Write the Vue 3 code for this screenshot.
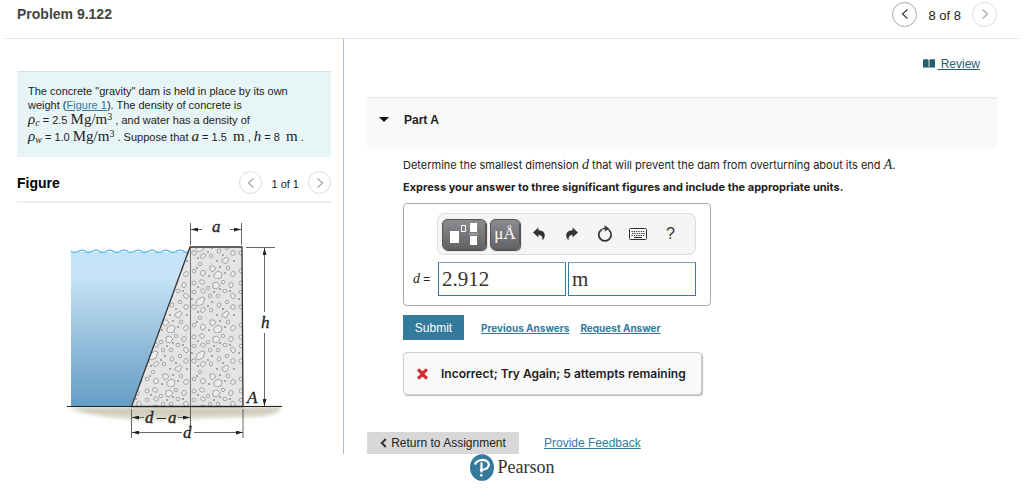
<script setup>
import { ref } from 'vue'

const value = ref('2.912')
const units = ref('m')

// Water surface, one crest every 14 units
const waves = 'M71 251' + 'q3 2.5 7 .5q4 -2.500 7 -.5'.repeat(8) + 'q2 2 5 .5'

// Stones of one texture tile: [x, y, rx, ry, rotation]
const stones = [
  [4, 4, 2, 2, 0], [12, 3, 2.6, 2, 30], [33, 3, 1.7, 1.7, 0], [41, 6, 2.1, 2.6, 20],
  [18, 9, 1.7, 1.7, 0], [4, 13, 2, 1.7, 0], [13, 12, 2.4, 1.9, 40], [35, 12, 2.1, 1.7, 0],
  [43, 17, 2.8, 2.2, 60], [20, 17, 1.6, 2, 0], [28, 17, 1.8, 1.8, 0], [4, 28, 2.4, 1.9, 30],
  [37, 23, 1.7, 1.7, 0], [29, 26, 1.8, 2.3, 20], [43, 28, 2.2, 2.4, 0],
  [13, 31, 2.9, 2, 140], [21, 31, 1.6, 2, 0], [10, 39, 1.7, 1.7, 0],
  [4, 46, 1.8, 1.8, 0], [13, 48, 2.4, 2.8, 20], [38, 43, 1.6, 2, 0],
  [43, 49, 2.6, 2.2, 130]
]
const chunks = [
  'M7 21l5-3 3 1-2 6-5 2-2-2z',
  'M23 4l4-1 3 3-3 4-4-1z',
  'M24 49l4-3 4 2-1 5-5 1-2-2z',
  'M32 35l5-3 2 2-3 5-4-2z',
  'M20 41l4 0 2 3-4 3-2-2z'
]
const grains = [
  [8, 8], [30, 10], [24, 13], [40, 12], [2, 20], [22, 23], [33, 30], [8, 33], [27, 36],
  [44, 36], [7, 43], [30, 42], [35, 48], [19, 51], [18, 27]
]
const arrows = [
  'M202 229.500H191', 'M230 229.500H241', 'M264.500 312V248', 'M264.500 333V406',
  'M144 417.500H132', 'M178 417.500H190', 'M182 432.500H132', 'M194 432.500H243'
]
</script>

<template>
  <div class="page">
    <header class="topbar">
      <h1>Problem 9.122</h1>
      <nav class="pager" aria-label="Problems">
        <button class="round active" aria-label="Previous problem">
          <svg width="8" height="12" viewBox="0 0 8 12"><path d="M6.500 1.500 1.500 6l5 4.500" /></svg>
        </button>
        <span>8 of 8</span>
        <button class="round" aria-label="Next problem">
          <svg width="8" height="12" viewBox="0 0 8 12"><path d="M1.500 1.500 6.500 6l-5 4.500" /></svg>
        </button>
      </nav>
    </header>

    <main class="columns">
      <section class="left">
        <p class="statement">
          <span class="row">The concrete "gravity" dam is held in place by its own</span>
          <span class="row">weight (<a href="#figure">Figure 1</a>). The density of concrete is</span>
          <span class="row tall"><i>ρ<sub>c</sub></i> = 2.5 <b>Mg/m<sup>3</sup></b> , and water has a density of</span>
          <span class="row tall"><i>ρ<sub>w</sub></i> = 1.0 <b>Mg/m<sup>3</sup></b> . Suppose that <i>a</i> = 1.5 &nbsp;<b>m</b> , <i>h</i> = 8 &nbsp;<b>m</b> .</span>
        </p>

        <div class="figure-head">
          <h2>Figure</h2>
          <nav class="pager small" aria-label="Figures">
            <button class="round" aria-label="Previous figure">
              <svg width="8" height="12" viewBox="0 0 8 12"><path d="M6.500 1.500 1.500 6l5 4.500" /></svg>
            </button>
            <span>1 of 1</span>
            <button class="round" aria-label="Next figure">
              <svg width="8" height="12" viewBox="0 0 8 12"><path d="M1.500 1.500 6.500 6l-5 4.500" /></svg>
            </button>
          </nav>
        </div>

        <svg id="figure" class="figure" width="230" height="230" viewBox="60 215 230 230" role="img" aria-label="Gravity dam holding back water">
          <defs>
            <linearGradient id="water" x1="0" y1="0" x2="0" y2="1">
              <stop offset="0" stop-color="#c3e3f8" />
              <stop offset="0.15" stop-color="#c8e5f8" />
              <stop offset="0.5" stop-color="#9ec5e0" />
              <stop offset="1" stop-color="#669dc5" />
            </linearGradient>
            <linearGradient id="soil" x1="0" y1="0" x2="0" y2="1">
              <stop offset="0" stop-color="#c9c7b5" />
              <stop offset="1" stop-color="#dad8cb" />
            </linearGradient>
            <filter id="soft" x="-10%" y="-50%" width="120%" height="200%"><feGaussianBlur stdDeviation="2" /></filter>
            <pattern id="concrete" x="190" y="333" width="47" height="54" patternUnits="userSpaceOnUse">
              <rect width="47" height="54" fill="#e4e4e4" />
              <g fill="#ececec" stroke="#888" stroke-width="0.700">
                <ellipse v-for="(s, i) in stones" :key="i" :cx="s[0]" :cy="s[1]" :rx="s[2]" :ry="s[3]" :transform="`rotate(${s[4]} ${s[0]} ${s[1]})`" />
                <path v-for="c in chunks" :key="c" :d="c" stroke-linejoin="round" />
              </g>
              <g fill="#333"><circle v-for="(g, i) in grains" :key="i" :cx="g[0]" :cy="g[1]" r="0.700" /></g>
            </pattern>
            <marker id="arrow" markerWidth="7" markerHeight="4" refX="7" refY="2" orient="auto" markerUnits="userSpaceOnUse"><path d="M0 0 7 2 0 4z" fill="#222" /></marker>
          </defs>
          <path d="M70 407H281Q280 417 240 417L150 420Q82 417 70 407" fill="url(#soil)" filter="url(#soft)" />
          <path d="M71 252H188.500L131.500 406H71z" fill="url(#water)" />
          <path :d="waves" fill="none" stroke="#54b9ea" stroke-width="1.300" />
          <path d="M190 247H242L243 406.500H131.500z" fill="url(#concrete)" stroke="#333" stroke-width="1.300" />
          <path d="M190.500 247V406" stroke="#555" stroke-width="0.800" />
          <path d="M67 406.500H282" stroke="#222" stroke-width="1.200" />
          <g fill="none" stroke="#555" stroke-width="0.900">
            <path d="M190.500 223V245M241.500 223V245M246 247.500H275M190.500 407V426M131.500 409V438M243 409V438" />
            <path v-for="a in arrows" :key="a" :d="a" marker-end="url(#arrow)" />
          </g>
          <g class="dims">
            <text x="212" y="232">a</text>
            <text x="261" y="328">h</text>
            <text x="247" y="403">A</text>
            <text x="145" y="423">d</text>
            <text x="157" y="422">–</text>
            <text x="168" y="423">a</text>
            <text x="183" y="438">d</text>
          </g>
        </svg>
      </section>

      <section class="right">
        <div class="review">
          <svg width="12" height="10" viewBox="0 0 12 10" fill="#265d73"><path d="M0 1 1 .3H4.600L5.600 1V9L4.600 8.500H0zM6.400 1 7.400.3H12V8.500H7.400L6.400 9z" /></svg>
          <a href="#review">&nbsp;Review</a>
        </div>

        <h2 class="part"><button aria-expanded="true"><span class="caret"></span>Part A</button></h2>

        <div class="question">
          <p class="ask">Determine the smallest dimension <i>d</i> that will prevent the dam from overturning about its end <i>A</i>.</p>
          <p class="hint">Express your answer to three significant figures and include the appropriate units.</p>

          <div class="answer">
            <div class="tools">
              <button class="key wide" aria-label="Templates">
                <svg width="28" height="24" viewBox="0 0 28 24"><path d="M0 9h9v12H0zM20 1h7v9h-7zM20 14h7v9h-7z" fill="#fff" /><path d="M11.500 3.500h4v6h-4z" fill="none" stroke="#fff" /><path d="M19 12h9" stroke="#bbb" /></svg>
              </button>
              <button class="key units" aria-label="Units">μÅ</button>
              <button class="tool" aria-label="Undo">
                <svg width="14" height="14" viewBox="0 0 14 14"><path d="M1 5.500 6.500 .5V3.300Q13 3.600 12.800 9 12.500 11.500 10.500 13.500 10.800 8 6.500 7.800V10.500z" fill="#333" /></svg>
              </button>
              <button class="tool" aria-label="Redo">
                <svg width="14" height="14" viewBox="0 0 14 14"><path d="M13 5.500 7.500 .5V3.300Q1 3.600 1.200 9 1.500 11.500 3.500 13.500 3.200 8 7.500 7.800V10.500z" fill="#333" /></svg>
              </button>
              <button class="tool" aria-label="Reset">
                <svg width="16" height="18" viewBox="0 0 16 18"><path d="M4.800 4.400A6.200 6.200 0 1 0 11.500 4.600" fill="none" stroke="#333" stroke-width="1.700" /><path d="M7 0 12.500 3.800 7.500 6.500 8.200 4 5.500 4.800 5 3.600 8 2.600z" fill="#333" /></svg>
              </button>
              <button class="tool" aria-label="Keyboard">
                <svg width="18" height="12" viewBox="0 0 18 12"><rect x=".5" y=".5" width="17" height="11" rx="1" fill="#fff" stroke="#333" /><path d="M2.500 3.500H16M3 5.500H16M2.500 7.500H16" stroke="#333" stroke-width="1.200" stroke-dasharray="1.300 1" /><path d="M5 9.500H13" stroke="#333" stroke-width="1.200" /></svg>
              </button>
              <button class="tool help" aria-label="Help">?</button>
            </div>
            <div class="entry">
              <label for="value"><i>d</i> =</label>
              <input id="value" v-model="value" />
              <input v-model="units" aria-label="Units of d" />
            </div>
          </div>

          <div class="actions">
            <button class="submit">Submit</button>
            <a href="#previous">Previous Answers</a>
            <a href="#request">Request Answer</a>
          </div>

          <div class="result" role="status">
            <svg width="13" height="12" viewBox="0 0 13 12"><path d="M2 1.500Q5 4 6.500 6T11 10.500M11 1.500Q7.500 4 6.500 6T2 10.500" fill="none" stroke="#d02b2f" stroke-width="3.200" /></svg>
            Incorrect; Try Again; 5 attempts remaining
          </div>
        </div>

        <div class="bottom">
          <button class="return">
            <svg width="7" height="10" viewBox="0 0 7 10"><path d="M5.800 1 1.800 5l4 4" fill="none" stroke="#333" stroke-width="2" /></svg>
            Return to Assignment
          </button>
          <a href="#feedback">Provide Feedback</a>
        </div>
      </section>
    </main>

    <footer class="brand">
      <svg width="24" height="27" viewBox="0 0 24 27" aria-hidden="true"><ellipse cx="12" cy="13.500" rx="12" ry="13.300" fill="#347a9c" /><path d="M5 10.500Q7 6 12.500 5.800 18.500 6 18.800 10.800 18.500 16 10 16" fill="none" stroke="#fff" stroke-width="2.200" /><path d="M11.500 8.500V18.500" stroke="#fff" stroke-width="2.200" /><circle cx="11.300" cy="21.300" r="1.300" fill="#fff" /></svg>
      <span>Pearson</span>
    </footer>
  </div>
</template>

<style>
body { margin: 0; background: #fff; }
</style>

<style scoped>
.page { font-family: "Liberation Sans", Arial, sans-serif; color: #222; font-size: 12px; }
h1, h2, p { margin: 0; }
button { font-family: inherit; margin: 0; padding: 0; border: 0; background: none; color: inherit; }
svg { display: block; flex: none; }
a { color: #347a9c; }
i, b { font-family: "Liberation Serif", serif; font-weight: normal; }
.topbar { box-sizing: border-box; height: 39px; margin: 0 5px; padding: 0 22px 10px 12px; border-bottom: 1px solid #e2e2e2; display: flex; align-items: center; justify-content: space-between; }
h1 { font-size: 14px; line-height: 16px; color: #444; }
.pager { display: flex; align-items: center; gap: 11px; font-size: 13px; }
.pager span { padding-top: 3px; }
.round { width: 25px; height: 25px; box-sizing: border-box; border: 1px solid #ddd; border-radius: 50%; display: flex; align-items: center; justify-content: center; color: #aaa; }
.round path { fill: none; stroke: currentColor; stroke-width: 1.3; }
.round.active { border-color: #aaa; color: #444; }
.small .round { width: 23px; height: 23px; }
.small { gap: 9px; font-size: 11px; }

.columns { display: grid; grid-template-columns: 344px 1fr; min-height: 415px; }
.left { box-sizing: border-box; border-right: 1px solid #aebdcb; padding: 32px 12px 0 17px; }
.statement { background: #e8f5f7; border-top: 1px solid #d3dfdf; padding: 12px 0 11px 11px; font-size: 11px; }
.row { display: block; line-height: 14px; white-space: nowrap; }
.row.tall { line-height: 17px; }
.row i, .row b { font-size: 15px; line-height: 14px; }
.row sub, .row sup { font-size: 10px; line-height: 0; }
.row sub { vertical-align: -2px; }
.row sup { vertical-align: 4px; }
.figure-head { display: flex; align-items: center; justify-content: space-between; height: 46px; padding: 7px 0 0; box-sizing: border-box; border-bottom: 2px solid #eee; margin-bottom: 12px; }
.figure-head h2 { font-size: 14px; line-height: 16px; color: #000; }
.figure { margin-left: 43px; }
.dims { font: italic 17px "Liberation Serif", serif; fill: #222; stroke: #222; stroke-width: 0.3; }

.right { padding: 18px 27px 0 23px; }
.review { display: flex; justify-content: flex-end; align-items: center; gap: 2px; line-height: 14px; padding-right: 17px; margin-bottom: 26px; }
.review a { color: #265d73; }
.part { background: #f9f9f9; border-top: 2px solid #eee; height: 49px; font-size: 12px; }
.part button { height: 41px; font-size: 12px; font-weight: bold; display: flex; align-items: center; gap: 15px; padding-left: 12px; }
.caret { border: 5px solid transparent; border-top-color: #111; border-bottom: 0; }
.question { padding: 9px 36px 0; }
.ask, .hint { font-family: Inter, "Liberation Sans", sans-serif; font-size: 11px; line-height: 16px; white-space: nowrap; }
.ask i { font-size: 14px; line-height: 14px; }
.hint { font-weight: bold; margin-top: 6px; }
.answer { width: 308px; box-sizing: border-box; border: 1px solid #aaa; border-radius: 4px; margin-top: 8px; padding: 9px 14px 9px 9px; }
.tools { box-sizing: border-box; height: 42px; margin-left: 24px; padding: 0 4px; border: 1px solid #ddd; border-radius: 7px; background: #f5f5f5; display: flex; align-items: center; }
.key { height: 31px; width: 30px; box-sizing: border-box; border: 1px solid #555; border-radius: 5px; background: linear-gradient(#8b8b90, #636366); box-shadow: 1px 1px 1px #444; display: flex; align-items: center; justify-content: center; }
.key.wide { width: 44px; margin-right: 4px; }
.key.units { color: #fff; font: 17px "Liberation Serif", serif; margin-right: 2px; }
.tool { width: 33px; height: 30px; display: flex; align-items: center; justify-content: center; color: #333; }
.help { font-size: 16px; }
.entry { display: flex; align-items: center; gap: 2px; margin-top: 7px; }
.entry label { width: 23px; white-space: nowrap; font-size: 12px; }
.entry i { font-size: 14px; }
.entry input { flex: 1; min-width: 0; height: 34px; box-sizing: border-box; border: 1px solid #347a9c; border-top-color: #78a7bd; border-radius: 0; padding: 0 3px; background: #fff; color: #333; font: 21px "Liberation Serif", serif; outline: 0; }
.actions { display: flex; align-items: center; margin-top: 9px; font-family: Inter, "Liberation Sans", sans-serif; font-size: 10px; font-weight: bold; }
.submit { width: 61px; height: 25px; background: #347a9c; color: #fff; font-family: "Liberation Sans", sans-serif; font-size: 12px; margin-right: 17px; }
.actions a + a { margin-left: 11px; }
.result { width: 299px; height: 43px; box-sizing: border-box; margin-top: 12px; border: 1px solid #ccc; border-radius: 4px; background: #f9f9f9; box-shadow: 1px 1px 1px #bbb; padding-left: 12px; display: flex; align-items: center; gap: 12px; font-family: Inter, "Liberation Sans", sans-serif; font-weight: 600; white-space: nowrap; }
.bottom { display: flex; align-items: center; gap: 25px; margin-top: 37px; }
.return { width: 152px; height: 22px; background: #d8d8d8; font-size: 12px; display: flex; align-items: center; justify-content: center; gap: 4px; white-space: nowrap; }
.brand { display: flex; align-items: center; justify-content: center; gap: 4px; font: 18px "Liberation Serif", serif; color: #333; }
</style>
